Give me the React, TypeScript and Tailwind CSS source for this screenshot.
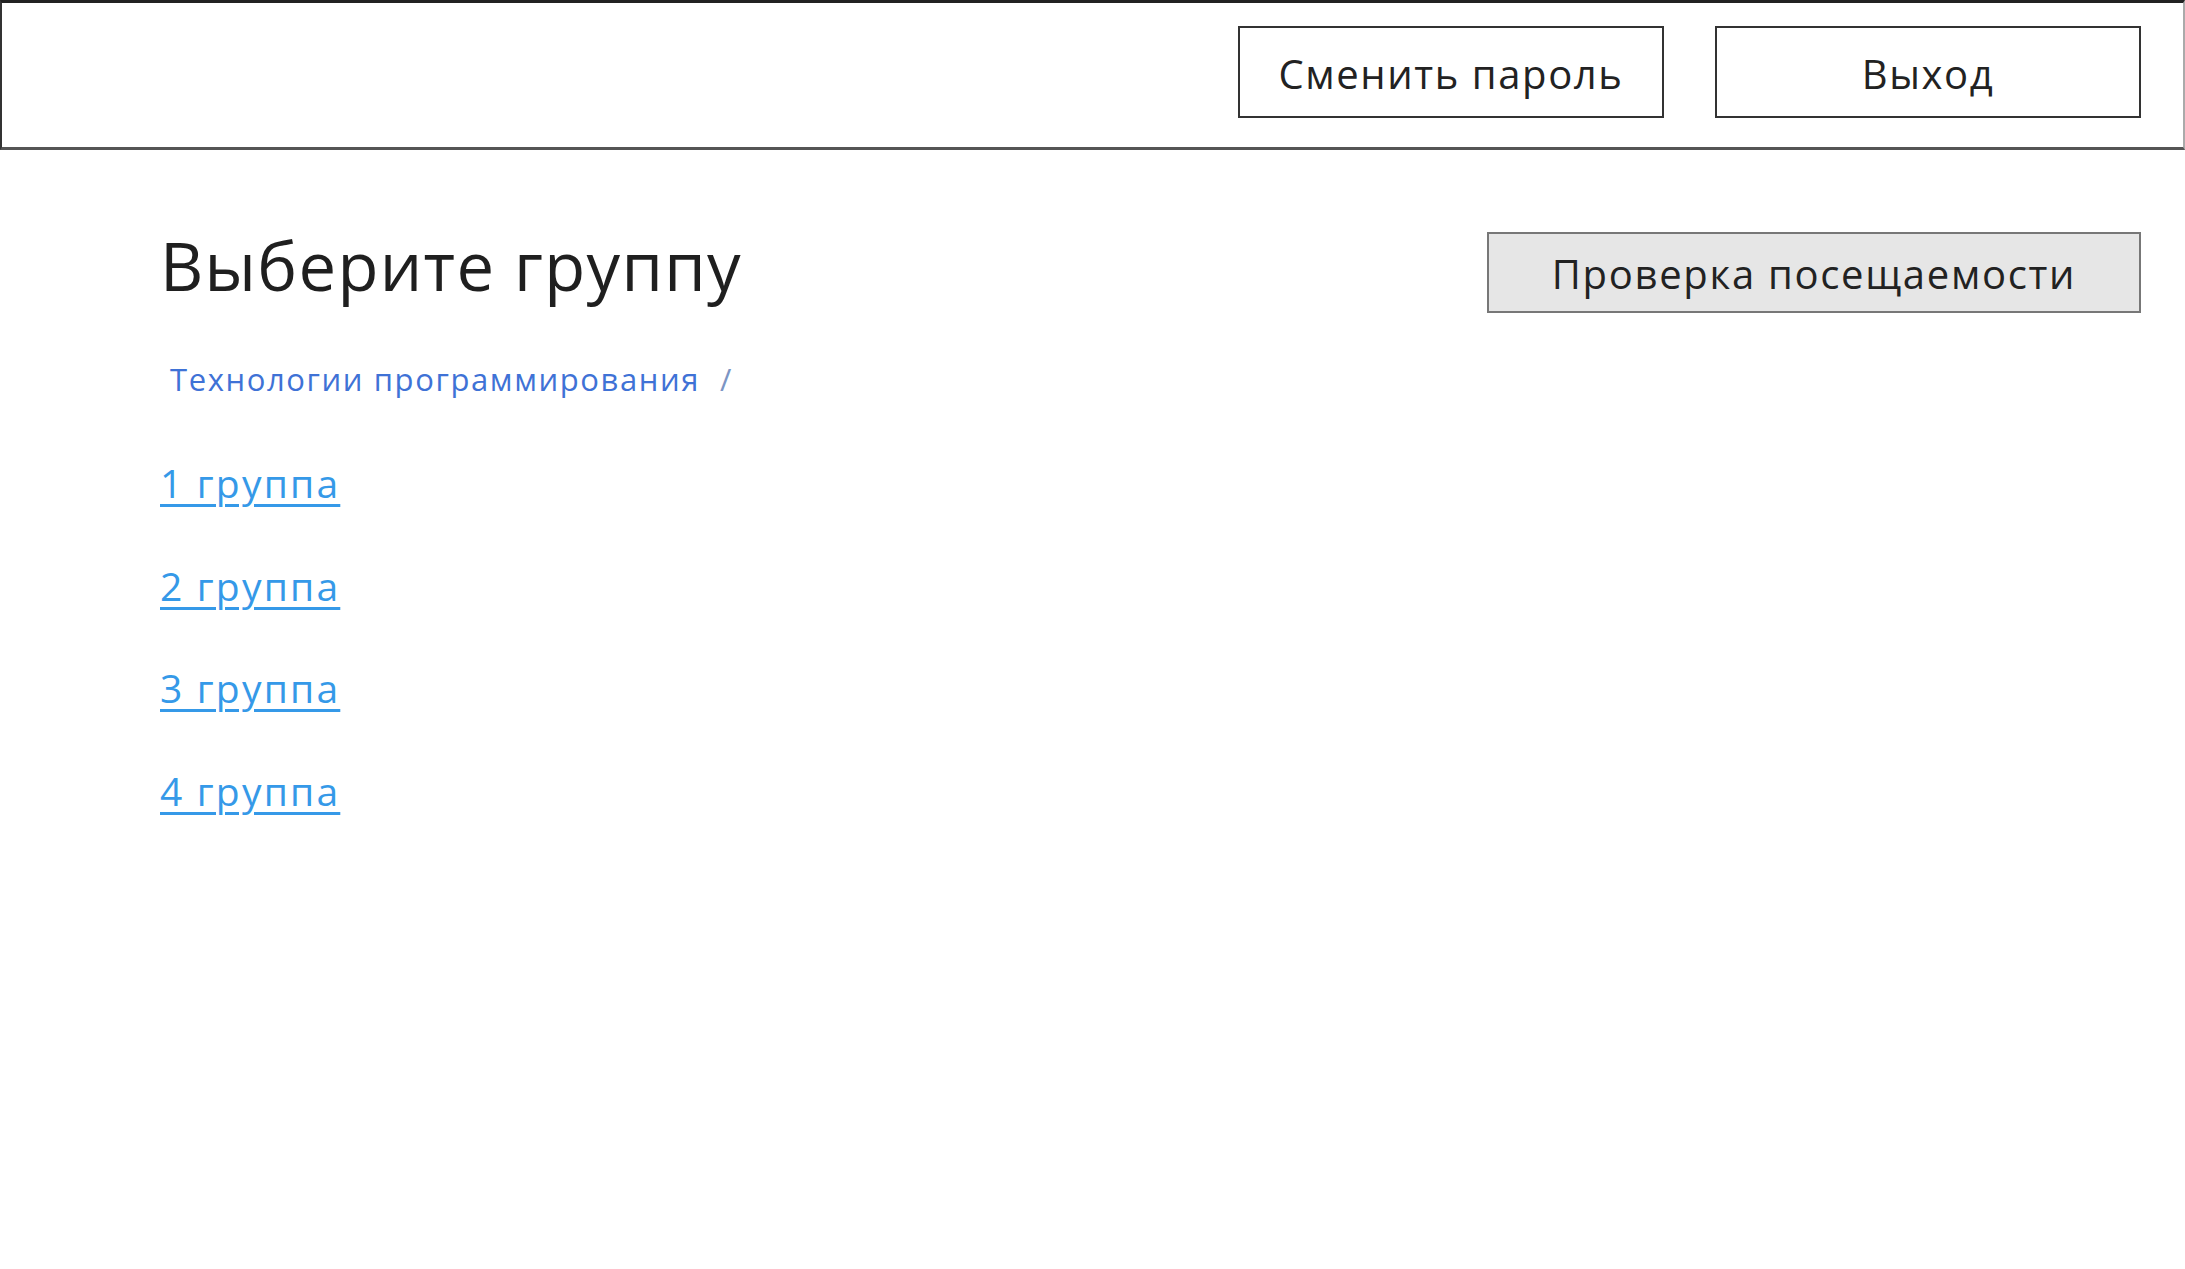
import React from 'react'

// Group selection page: header with account buttons, title, breadcrumb and list of groups

const groups = ['1 группа', '2 группа', '3 группа', '4 группа']

function HeaderButton({ label }: { label: string }) {
  return (
    <button className="flex h-[92px] w-[426px] items-center justify-center border-2 border-[#333] bg-white pt-[3px] text-[40px] leading-none tracking-[1.6px] text-[#222]">
      {label}
    </button>
  )
}

export default function App() {
  return (
    <div className="h-[1269px] w-[2185px] overflow-hidden bg-white font-['Open_Sans',sans-serif] text-[#1f1f1f]">
      {/* Top bar */}
      <header className="flex h-[150px] items-start justify-end gap-[51px] border-b-[3px] border-l-2 border-r-2 border-t-[3px] border-b-[#555] border-l-[#333] border-r-[#aaa] border-t-[#222] pr-[42px] pt-[23px]">
        <HeaderButton label="Сменить пароль" />
        <HeaderButton label="Выход" />
      </header>

      {/* Content */}
      <main className="flex items-start justify-between pl-[160px] pr-[44px] pt-[82px]">
        <div className="flex flex-col">
          <h1 className="text-[67px] font-normal leading-none tracking-[1.3px]">Выберите группу</h1>

          <nav className="ml-[10px] mt-[65px] flex items-center gap-[20px] text-[31px] leading-none tracking-[1.6px]">
            <span className="text-[#3f72d6]">Технологии программирования</span>
            <span className="text-[#7c95c4]">/</span>
          </nav>

          <ul className="mt-[37px] flex flex-col">
            {groups.map((g) => (
              <li key={g} className="h-[102.5px] text-[39px] leading-[102px] tracking-[2.2px]">
                <a href="#" className="text-[#3599e8] underline decoration-[3px] underline-offset-[6px]">
                  {g}
                </a>
              </li>
            ))}
          </ul>
        </div>

        <button className="flex h-[81px] w-[654px] items-center justify-center border-2 border-[#777] bg-[#e6e6e6] pt-[3px] text-[40px] leading-none tracking-[1.7px] text-[#222]">
          Проверка посещаемости
        </button>
      </main>
    </div>
  )
}
